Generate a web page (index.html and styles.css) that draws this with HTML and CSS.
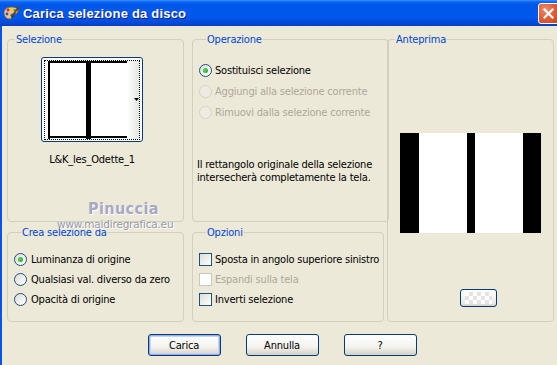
FILE: index.html
```html
<!DOCTYPE html>
<html lang="it">
<head>
    <meta charset="UTF-8">
    <title>Carica selezione da disco</title>
    <link rel="stylesheet" href="styles.css">
</head>
<body>
    <div class="window">
        <div class="titlebar">
            <svg class="app-icon" width="17" height="17" viewBox="0 0 17 17">
                <path d="M8 2 C3 2 1 5 1 8 C1 11 3 14 7 14 C9 14 9 12 8 11 C7 10 8 9 10 9 C13 9 15 8 15 6 C15 3 12 2 8 2 Z" fill="#E8C68A" stroke="#7A5A2A" stroke-width="0.8"/>
                <circle cx="5" cy="5" r="1.4" fill="#E02020"/>
                <circle cx="8.5" cy="4.2" r="1.3" fill="#F0D020"/>
                <circle cx="11.8" cy="5.2" r="1.3" fill="#2FA84A"/>
                <circle cx="4" cy="9" r="1.4" fill="#2050E0"/>
                <path d="M16 2 L9.5 10.5" stroke="#6A3E1A" stroke-width="1.6" stroke-linecap="round"/>
                <path d="M9.8 10 L8 13.5 L11 11.2 Z" fill="#333"/>
            </svg>
            <span class="title">Carica selezione da disco</span>
            <span class="close-btn">
                <svg width="13" height="13" viewBox="0 0 13 13"><path d="M2.5 2.5 L10.5 10.5 M10.5 2.5 L2.5 10.5" stroke="#fff" stroke-width="2.2" stroke-linecap="square"/></svg>
            </span>
        </div>

        <div class="dialog">
            <div class="groups">
                <fieldset class="group sel-group">
                    <legend>Selezione</legend>
                    <button class="thumb">
                        <span class="focus-ring"></span>
                        <svg class="thumb-img" width="91" height="78" viewBox="0 0 91 78">
                            <defs>
                                <linearGradient id="drop" x1="0" x2="1" y1="0" y2="0">
                                    <stop offset="0" stop-color="#ffffff"/>
                                    <stop offset="1" stop-color="#e4e4e0"/>
                                </linearGradient>
                            </defs>
                            <rect x="0" y="0" width="79" height="78" fill="#fff"/>
                            <rect x="79" y="0" width="12" height="78" fill="url(#drop)"/>
                            <rect x="0" y="0" width="2" height="78" fill="#000"/>
                            <rect x="0" y="0" width="79" height="2" fill="#000"/>
                            <rect x="0" y="75" width="79" height="2" fill="#000"/>
                            <rect x="38" y="0" width="5" height="78" fill="#000"/>
                            <path d="M86 37 L91 37 L88.5 40 Z" fill="#000"/>
                        </svg>
                    </button>
                    <div class="thumb-name">L&amp;K_les_Odette_1</div>
                </fieldset>

                <fieldset class="group op-group">
                    <legend>Operazione</legend>
                    <div class="opt"><span class="radio checked"></span>Sostituisci selezione</div>
                    <div class="opt disabled"><span class="radio"></span>Aggiungi alla selezione corrente</div>
                    <div class="opt disabled"><span class="radio"></span>Rimuovi dalla selezione corrente</div>
                    <p class="note">Il rettangolo originale della selezione<br>intersecherà completamente la tela.</p>
                </fieldset>

                <fieldset class="group preview-group">
                    <legend>Anteprima</legend>
                    <div class="preview">
                        <span class="bar black b1"></span>
                        <span class="bar white w1"></span>
                        <span class="bar black b2"></span>
                        <span class="bar white w2"></span>
                        <span class="bar black b3"></span>
                    </div>
                    <button class="zoom-btn"><span class="checker"></span></button>
                </fieldset>

                <fieldset class="group src-group">
                    <legend>Crea selezione da</legend>
                    <div class="opt"><span class="radio checked"></span>Luminanza di origine</div>
                    <div class="opt"><span class="radio"></span>Qualsiasi val. diverso da zero</div>
                    <div class="opt"><span class="radio"></span>Opacità di origine</div>
                </fieldset>

                <fieldset class="group opts-group">
                    <legend>Opzioni</legend>
                    <div class="opt"><span class="check"></span>Sposta in angolo superiore sinistro</div>
                    <div class="opt disabled"><span class="check"></span>Espandi sulla tela</div>
                    <div class="opt"><span class="check"></span>Inverti selezione</div>
                </fieldset>
            </div>

            <div class="watermark">
                <div class="wm-name">Pinuccia</div>
                <div class="wm-url">www.maidiregrafica.eu</div>
            </div>

            <div class="actions">
                <button class="btn default">Carica</button>
                <button class="btn">Annulla</button>
                <button class="btn">?</button>
            </div>
        </div>
    </div>
</body>
</html>
```

FILE: styles.css
```css
* {
    box-sizing: border-box;
}

body {
    margin: 0;
    background-color: #ECE9D8;
    overflow: hidden;
    font-family: Tahoma, "DejaVu Sans Condensed", "Liberation Sans", sans-serif;
    font-size: 11px;
    letter-spacing: -0.2px;
    color: #000;
}

.window {
    width: 562px;
    height: 365px;
    overflow: hidden;
}

/* barra del titolo stile XP */
.titlebar {
    height: 26px;
    display: flex;
    align-items: center;
    padding-left: 3px;
    background: linear-gradient(to bottom, #3D8FFF 0px, #0A64F4 2px, #0056E8 5px, #0058EE 12px, #0256EA 18px, #004CDA 22px, #0043C8 25px, #003CB8 26px);
}

.app-icon {
    margin-top: 1px;
}

.title {
    margin-left: 3px;
    color: #fff;
    font-family: "Liberation Sans", Arial, sans-serif;
    font-weight: bold;
    font-size: 13px;
    letter-spacing: 0.2px;
    text-shadow: 1px 1px 0 #0A1E8C;
    flex: 1;
}

.close-btn {
    width: 21px;
    height: 21px;
    margin-right: 3px;
    border: 1px solid #fff;
    border-radius: 3px;
    display: flex;
    align-items: center;
    justify-content: center;
    background: radial-gradient(circle at 35% 30%, #F08E6E 0%, #E2603A 45%, #C4421E 100%);
}

.dialog {
    height: 339px;
    border-left: 2px solid #0B52E6;
    padding: 7px 0 0 5px;
    position: relative;
}

.groups {
    display: grid;
    grid-template-columns: 177px 192px 166px;
    grid-template-rows: 189px 96px;
    column-gap: 8px;
    row-gap: 4px;
}

.group {
    margin: 0;
    padding: 0;
    min-width: 0;
    border: 1px solid #D0D0BF;
    border-radius: 4px;
}

.group legend {
    margin-left: 7px;
    padding: 0 1px;
    color: #0046D5;
    line-height: 13px;
}

.op-group {
    margin-right: -5px;
}

.preview-group {
    grid-column: 3;
    grid-row: 1 / span 2;
    margin: 0 4px 0 -5px;
    display: flex;
    flex-direction: column;
    align-items: center;
}

/* selezione */
.sel-group {
    display: flex;
    flex-direction: column;
    align-items: center;
    padding-right: 7px;
    padding-top: 11px;
}

.thumb {
    position: relative;
    width: 102px;
    height: 85px;
    padding: 0;
    border: 1px solid #003C74;
    border-radius: 3px;
    background: #fff;
    cursor: pointer;
}

.focus-ring {
    position: absolute;
    left: 2px;
    top: 2px;
    right: 2px;
    bottom: 1px;
    border: 1px dotted #000;
}

.thumb-img {
    position: absolute;
    left: 6px;
    top: 3px;
}

.thumb-name {
    margin-top: 11px;
    line-height: 13px;
}

/* opzioni */
.op-group {
    padding: 14px 0 0 6px;
}

.src-group, .opts-group {
    padding: 10px 0 0 6px;
}

.src-group .opt, .opts-group .opt {
    height: 20px;
}

.opt {
    display: flex;
    align-items: center;
    height: 21px;
    white-space: nowrap;
}

.opt.disabled {
    color: #ACA899;
}

.radio {
    width: 13px;
    height: 13px;
    margin-right: 3px;
    border: 1px solid #1C5180;
    border-radius: 50%;
    background: linear-gradient(135deg, #DCDCD7, #FFFFFF);
    display: flex;
    align-items: center;
    justify-content: center;
}

.radio.checked::after {
    content: "";
    width: 5px;
    height: 5px;
    border-radius: 50%;
    background: radial-gradient(circle at 40% 40%, #55D855, #21A121);
}

.opt.disabled .radio {
    border-color: #D6D3C6;
    background: #EEECE2;
}

.src-group .radio {
    margin-right: 4px;
}

.check {
    width: 13px;
    height: 13px;
    margin-right: 3px;
    border: 1px solid #1C5180;
    background: linear-gradient(135deg, #DCDCD7, #FFFFFF);
}

.opt.disabled .check {
    border-color: #CAC8BB;
    background: #fff;
}

.note {
    margin: 35px 0 0 -2px;
    line-height: 13px;
}

/* anteprima */
.preview {
    display: flex;
    height: 100px;
    margin-top: 87px;
}

.bar.black {
    background: #000;
}

.bar.white {
    background: #fff;
}

.b1 { width: 19px; }
.w1 { width: 48px; }
.b2 { width: 8px; }
.w2 { width: 48px; }
.b3 { width: 18px; }

.zoom-btn {
    width: 37px;
    height: 18px;
    margin-top: 56px;
    margin-left: 16px;
    padding: 2px 4px;
    border: 1px solid #003C74;
    border-radius: 3px;
    background: linear-gradient(#FFFFFF, #ECEBE6 80%, #D6D0C5);
}

.checker {
    display: block;
    width: 100%;
    height: 100%;
    background-color: #fff;
    background-image: linear-gradient(45deg, #E4E4E4 25%, transparent 25%, transparent 75%, #E4E4E4 75%),
        linear-gradient(45deg, #E4E4E4 25%, transparent 25%, transparent 75%, #E4E4E4 75%);
    background-size: 8px 8px;
    background-position: 0 0, 4px 4px;
}

/* filigrana sopra i riquadri */
.watermark {
    position: absolute;
    left: 55px;
    top: 174px;
    width: 124px;
    pointer-events: none;
}

.wm-name {
    font-family: "DejaVu Sans Condensed", "DejaVu Sans", sans-serif;
    font-weight: bold;
    font-size: 16px;
    letter-spacing: 0.4px;
    color: #A8A8C4;
    text-shadow: 1px 1px 0 #fff;
    line-height: 18px;
    margin-left: 31px;
}

.wm-url {
    font-family: "DejaVu Sans", sans-serif;
    font-size: 10.5px;
    letter-spacing: -0.2px;
    color: #9A9AAE;
    text-shadow: 1px 1px 0 #fff;
    line-height: 12px;
}

/* pulsanti */
.actions {
    display: flex;
    justify-content: center;
    gap: 25px;
    margin-top: 12px;
    padding-right: 5px;
}

.btn {
    width: 73px;
    height: 22px;
    padding: 0;
    border: 1px solid #003C74;
    border-radius: 3px;
    background: linear-gradient(#FFFFFF, #F4F3EE 60%, #D6D0C5);
    font-family: inherit;
    font-size: 11px;
    letter-spacing: inherit;
    color: #000;
}

.btn.default {
    box-shadow: inset 0 0 0 1px #97AEE2, inset 0 0 0 2px #C2D3FC;
}
```
